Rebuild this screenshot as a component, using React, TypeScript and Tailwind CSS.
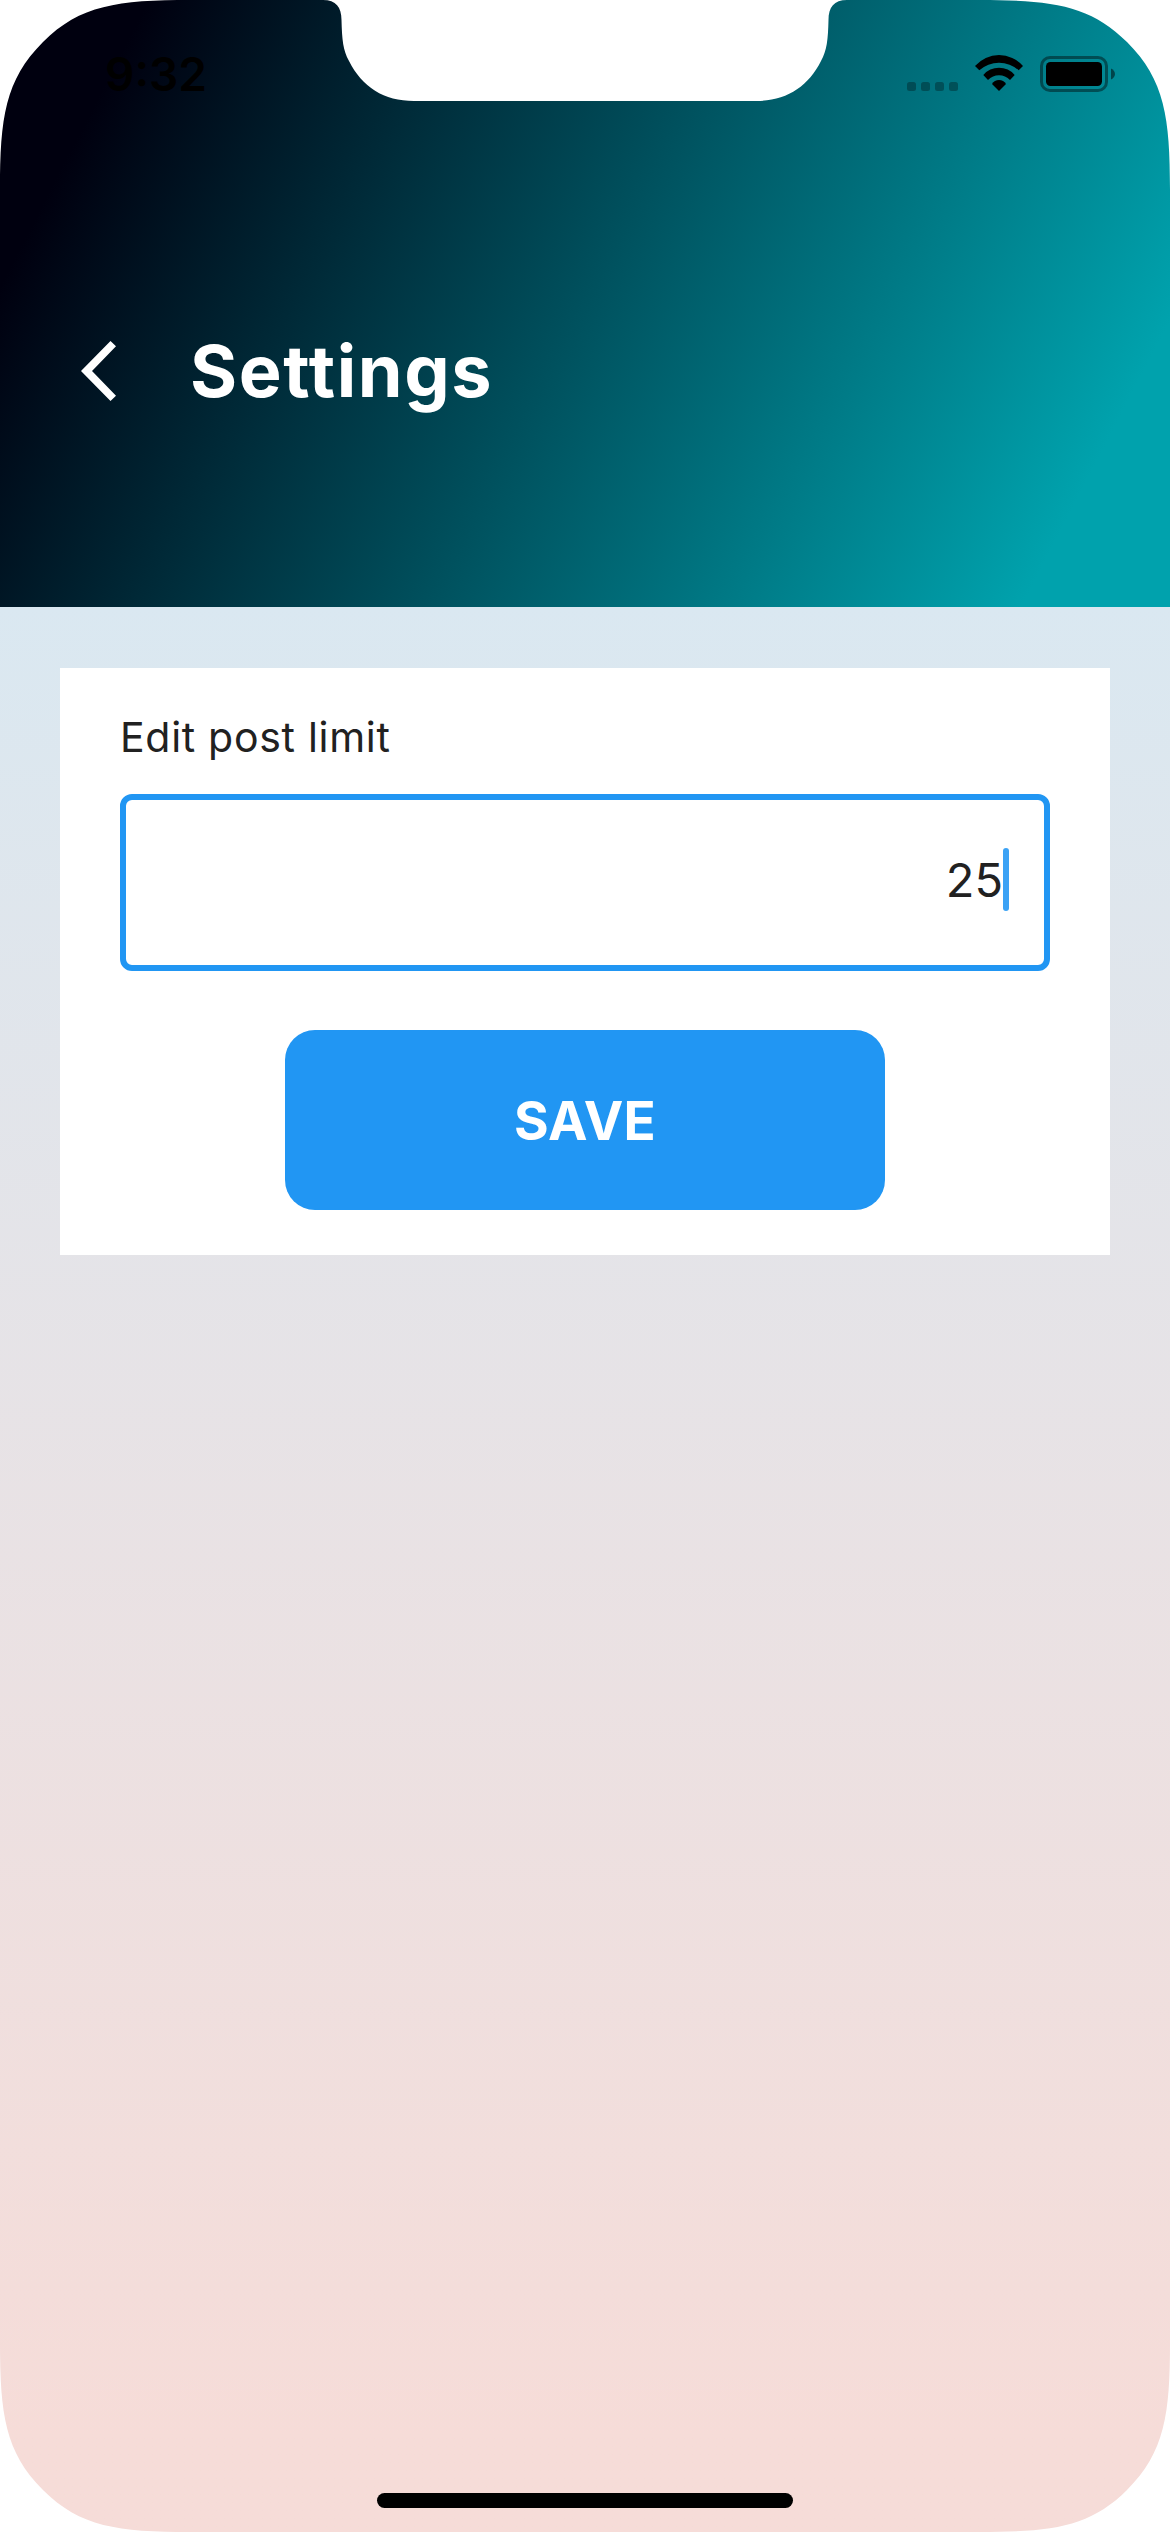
function DeviceFrame() {
  return (
    <svg
      className="pointer-events-none absolute inset-0 z-10 h-full w-full"
      viewBox="0 0 1170 2532"
      fill="#ffffff"
      aria-hidden="true"
    >
      <path d="M0 0V190C0 118 5 80 43 42C80 5 118 0 190 0Z" />
      <path d="M1170 0V190C1170 118 1165 80 1127 42C1090 5 1052 0 980 0Z" />
      <path d="M0 2532V2342C0 2414 5 2452 43 2490C80 2527 118 2532 190 2532Z" />
      <path d="M1170 2532V2342C1170 2414 1165 2452 1127 2490C1090 2527 1052 2532 980 2532Z" />
      <path d="M323 0C336 0 341.5 7 341.5 20C342 40 343 50 349 61C362 87 384 101 414 101H756C786 101 808 87 821 61C827 50 828 40 828.5 20C828.5 7 834 0 847 0Z" />
    </svg>
  );
}

function StatusIcons() {
  return (
    <svg className="h-[40px] w-[210px]" viewBox="0 0 210 40" fill="#000000" aria-hidden="true">
      <g fillOpacity="0.3">
        <rect x="1" y="28" width="9" height="9" rx="2.5" />
        <rect x="15" y="28" width="9" height="9" rx="2.5" />
        <rect x="29" y="28" width="9" height="9" rx="2.5" />
        <rect x="43" y="28" width="9" height="9" rx="2.5" />
      </g>
      <path d="M69 12A31.7 31.7 0 0 1 117 12L112.7 16.3A29.3 29.3 0 0 0 73.3 16.3Z" />
      <path d="M77.3 21A20.5 20.5 0 0 1 108.7 21L104 26A15.2 15.2 0 0 0 82 26Z" />
      <path d="M86 30A8.1 8.1 0 0 1 100 30L93 37Z" />
      <rect
        x="135.5"
        y="3.5"
        width="65"
        height="33"
        rx="8.5"
        fill="none"
        stroke="#000000"
        strokeOpacity="0.42"
        strokeWidth="3"
      />
      <rect x="140" y="8" width="56" height="24" rx="4.5" />
      <path d="M205 14.5C210.3 17 210.3 23 205 25.5Z" fillOpacity="0.5" />
    </svg>
  );
}

function StatusBar() {
  return (
    <div className="flex h-[141px] items-start justify-between pl-[105px] pr-[54px] pt-[51px]">
      <span className="text-[46px] leading-[46px] font-semibold text-black">9:32</span>
      <div className="pt-[3px]">
        <StatusIcons />
      </div>
    </div>
  );
}

function Header() {
  return (
    <header className="h-[607px] bg-[linear-gradient(117.42deg,#00000f_10%,#00a2ad_90%)]">
      <StatusBar />
      <div className="flex h-[460px] items-center gap-[74px] pl-[81px]">
        <svg className="h-[60px] w-[35px]" viewBox="0 0 35 60" fill="#ffffff" aria-hidden="true">
          <path d="M29.5 0L35 5.3L11 30L35 54.7L29.5 60L0 30Z" />
        </svg>
        <h1 className="text-[72px] leading-[72px] font-bold tracking-[1.6px] text-white">Settings</h1>
      </div>
    </header>
  );
}

function PostLimitCard() {
  return (
    <section className="flex h-[587px] flex-col bg-white px-[60px] pt-[48px]">
      <p className="text-[41px] leading-[42px] tracking-[0.7px] text-[#212121]">Edit post limit</p>
      <div className="mt-[36px] flex h-[177px] items-center justify-end rounded-[12px] border-[6px] border-[#2196f3] pr-[35px] pb-[7px]">
        <span className="text-[47px] leading-[47px] text-[#212121]">25</span>
        <span className="h-[63px] w-[6px] rounded-full bg-[#3ba2f5]" />
      </div>
      <button className="mt-[59px] h-[180px] w-[600px] self-center rounded-[30px] bg-[#2196f3] pt-[2px] text-[53px] leading-[53px] font-bold tracking-[0.3px] text-white">
        SAVE
      </button>
    </section>
  );
}

export default function App() {
  return (
    <div className="relative flex h-[2532px] w-[1170px] flex-col overflow-hidden font-['Inter',sans-serif]">
      <Header />
      <main className="flex flex-1 flex-col justify-between bg-linear-to-b from-[#dae8f1] to-[#f6dcd8] to-95% px-[60px] pt-[61px] pb-[24px]">
        <PostLimitCard />
        <div className="h-[15px] w-[416px] self-center rounded-full bg-black" />
      </main>
      <DeviceFrame />
    </div>
  );
}
